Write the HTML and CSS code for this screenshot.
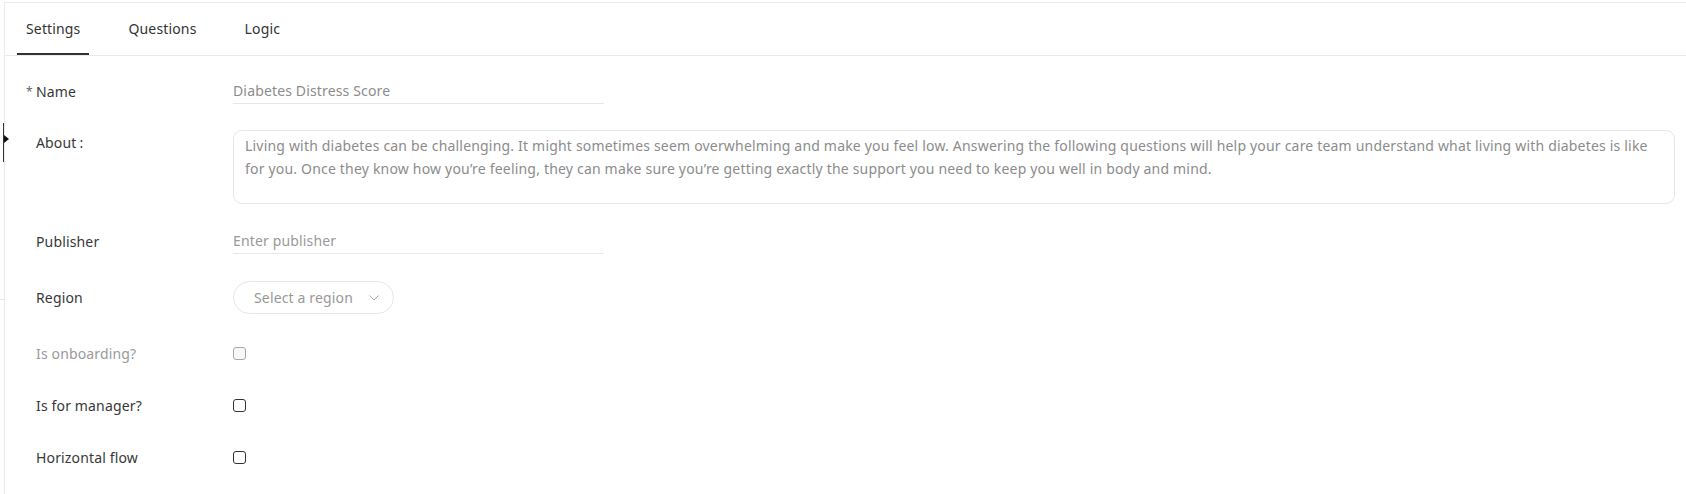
FILE: index.html
```html
<!DOCTYPE html>
<html lang="en">
<head>
<meta charset="utf-8">
<title>Settings</title>
<link rel="stylesheet" href="styles.css">
</head>
<body>
<div class="page">
  <span class="handle"><span class="handle-arrow"></span></span>
  <span class="tick"></span>
  <div class="panel">
    <nav class="tabs">
      <div class="tab tab-active">Settings</div>
      <div class="tab">Questions</div>
      <div class="tab">Logic</div>
    </nav>
    <form class="form">
      <div class="row row-name">
        <label class="label"><span class="req">*</span>Name</label>
        <div class="control"><div class="line-input value">Diabetes Distress Score</div></div>
      </div>
      <div class="row row-about">
        <label class="label label-top">About<span class="colon">:</span></label>
        <div class="control"><div class="textarea">Living with diabetes can be challenging. It might sometimes seem overwhelming and make you feel low. Answering the following questions will help your care team understand what living with diabetes is like for you. Once they know how you’re feeling, they can make sure you’re getting exactly the support you need to keep you well in body and mind.</div></div>
      </div>
      <div class="row row-pub">
        <label class="label">Publisher</label>
        <div class="control"><div class="line-input">Enter publisher</div></div>
      </div>
      <div class="row row-region">
        <label class="label">Region</label>
        <div class="control">
          <div class="select">Select a region
            <svg class="chev" width="10" height="6" viewBox="0 0 10 6"><path d="M0.5 0.5 L5 5 L9.5 0.5" fill="none" stroke="#a6a6a6" stroke-width="1"/></svg>
          </div>
        </div>
      </div>
      <div class="row row-check">
        <label class="label label-disabled">Is onboarding?</label>
        <div class="control"><span class="checkbox checkbox-disabled"></span></div>
      </div>
      <div class="row row-check">
        <label class="label">Is for manager?</label>
        <div class="control"><span class="checkbox"></span></div>
      </div>
      <div class="row row-check">
        <label class="label">Horizontal flow</label>
        <div class="control"><span class="checkbox"></span></div>
      </div>
    </form>
  </div>
</div>
</body>
</html>
```

FILE: styles.css
```css
* { box-sizing: border-box; }
html, body {
  margin: 0;
  padding: 0;
  background: #fff;
  overflow: hidden;
}
body {
  font-family: "Noto Sans", "Open Sans", sans-serif;
  font-size: 14px;
  letter-spacing: 0.15px;
  color: #333;
}
.page {
  position: relative;
  width: 1686px;
  height: 494px;
  padding: 2px 0 0 4px;
}
.panel {
  height: 100%;
  border-top: 1px solid #ebebeb;
  border-left: 1px solid #ebebeb;
}
.handle {
  position: absolute;
  left: 3px;
  top: 123px;
  width: 1px;
  height: 39px;
  background: #333;
}
.handle-arrow {
  position: absolute;
  left: 1px;
  top: 12px;
  width: 0;
  height: 0;
  border-top: 4px solid transparent;
  border-bottom: 4px solid transparent;
  border-left: 5px solid #111;
}
.tick {
  position: absolute;
  left: 0;
  top: 299px;
  width: 4px;
  height: 1px;
  background: #e6e6e6;
}
.tabs {
  display: flex;
  gap: 30px;
  height: 53px;
  padding-left: 12px;
  border-bottom: 1px solid #ebebeb;
}
.tab {
  display: flex;
  align-items: center;
  padding: 2px 9px 0;
  height: 52px;
  color: #333;
  border-bottom: 2px solid transparent;
  line-height: 20px;
}
.tab-active {
  border-bottom-color: #333;
}
.form {
  display: flex;
  flex-direction: column;
  padding: 24px 11px 0 31px;
}
.row {
  display: grid;
  grid-template-columns: 197px 1fr;
  align-items: center;
}
.row-name { margin-bottom: 26px; }
.row-about { margin-bottom: 26px; align-items: start; }
.row-pub { margin-bottom: 27px; }
.row-region { margin-bottom: 27px; }
.row-check { height: 25px; margin-bottom: 27px; }
.label {
  position: relative;
  line-height: 22px;
  color: #383838;
}
.label-top { padding-top: 2px; }
.label-disabled { color: #9a9a9a; }
.colon { margin-left: 3px; }
.req {
  position: absolute;
  left: -10px;
  top: 0;
  font-size: 12px;
  color: #666;
}
.line-input {
  width: 371px;
  height: 24px;
  line-height: 22px;
  color: #999;
  border-bottom: 1px solid #e8e8e8;
}
.line-input.value { color: #8c8c8c; }
.textarea {
  height: 74px;
  padding: 4px 11px;
  border: 1px solid #e6e6e6;
  border-radius: 9px;
  color: #8c8c8c;
  line-height: 22.6px;
  letter-spacing: 0.19px;
}
.select {
  display: inline-flex;
  align-items: center;
  width: 161px;
  height: 33px;
  padding: 0 0 0 20px;
  border: 1px solid #e6e6e6;
  border-radius: 17px;
  color: #999;
}
.chev {
  margin-left: 16px;
}
.checkbox {
  display: block;
  width: 13px;
  height: 13px;
  border: 1px solid #333;
  border-radius: 3px;
  background: #fff;
}
.checkbox-disabled {
  border-color: #a8a8a8;
  background: #f8f8f8;
}
```
